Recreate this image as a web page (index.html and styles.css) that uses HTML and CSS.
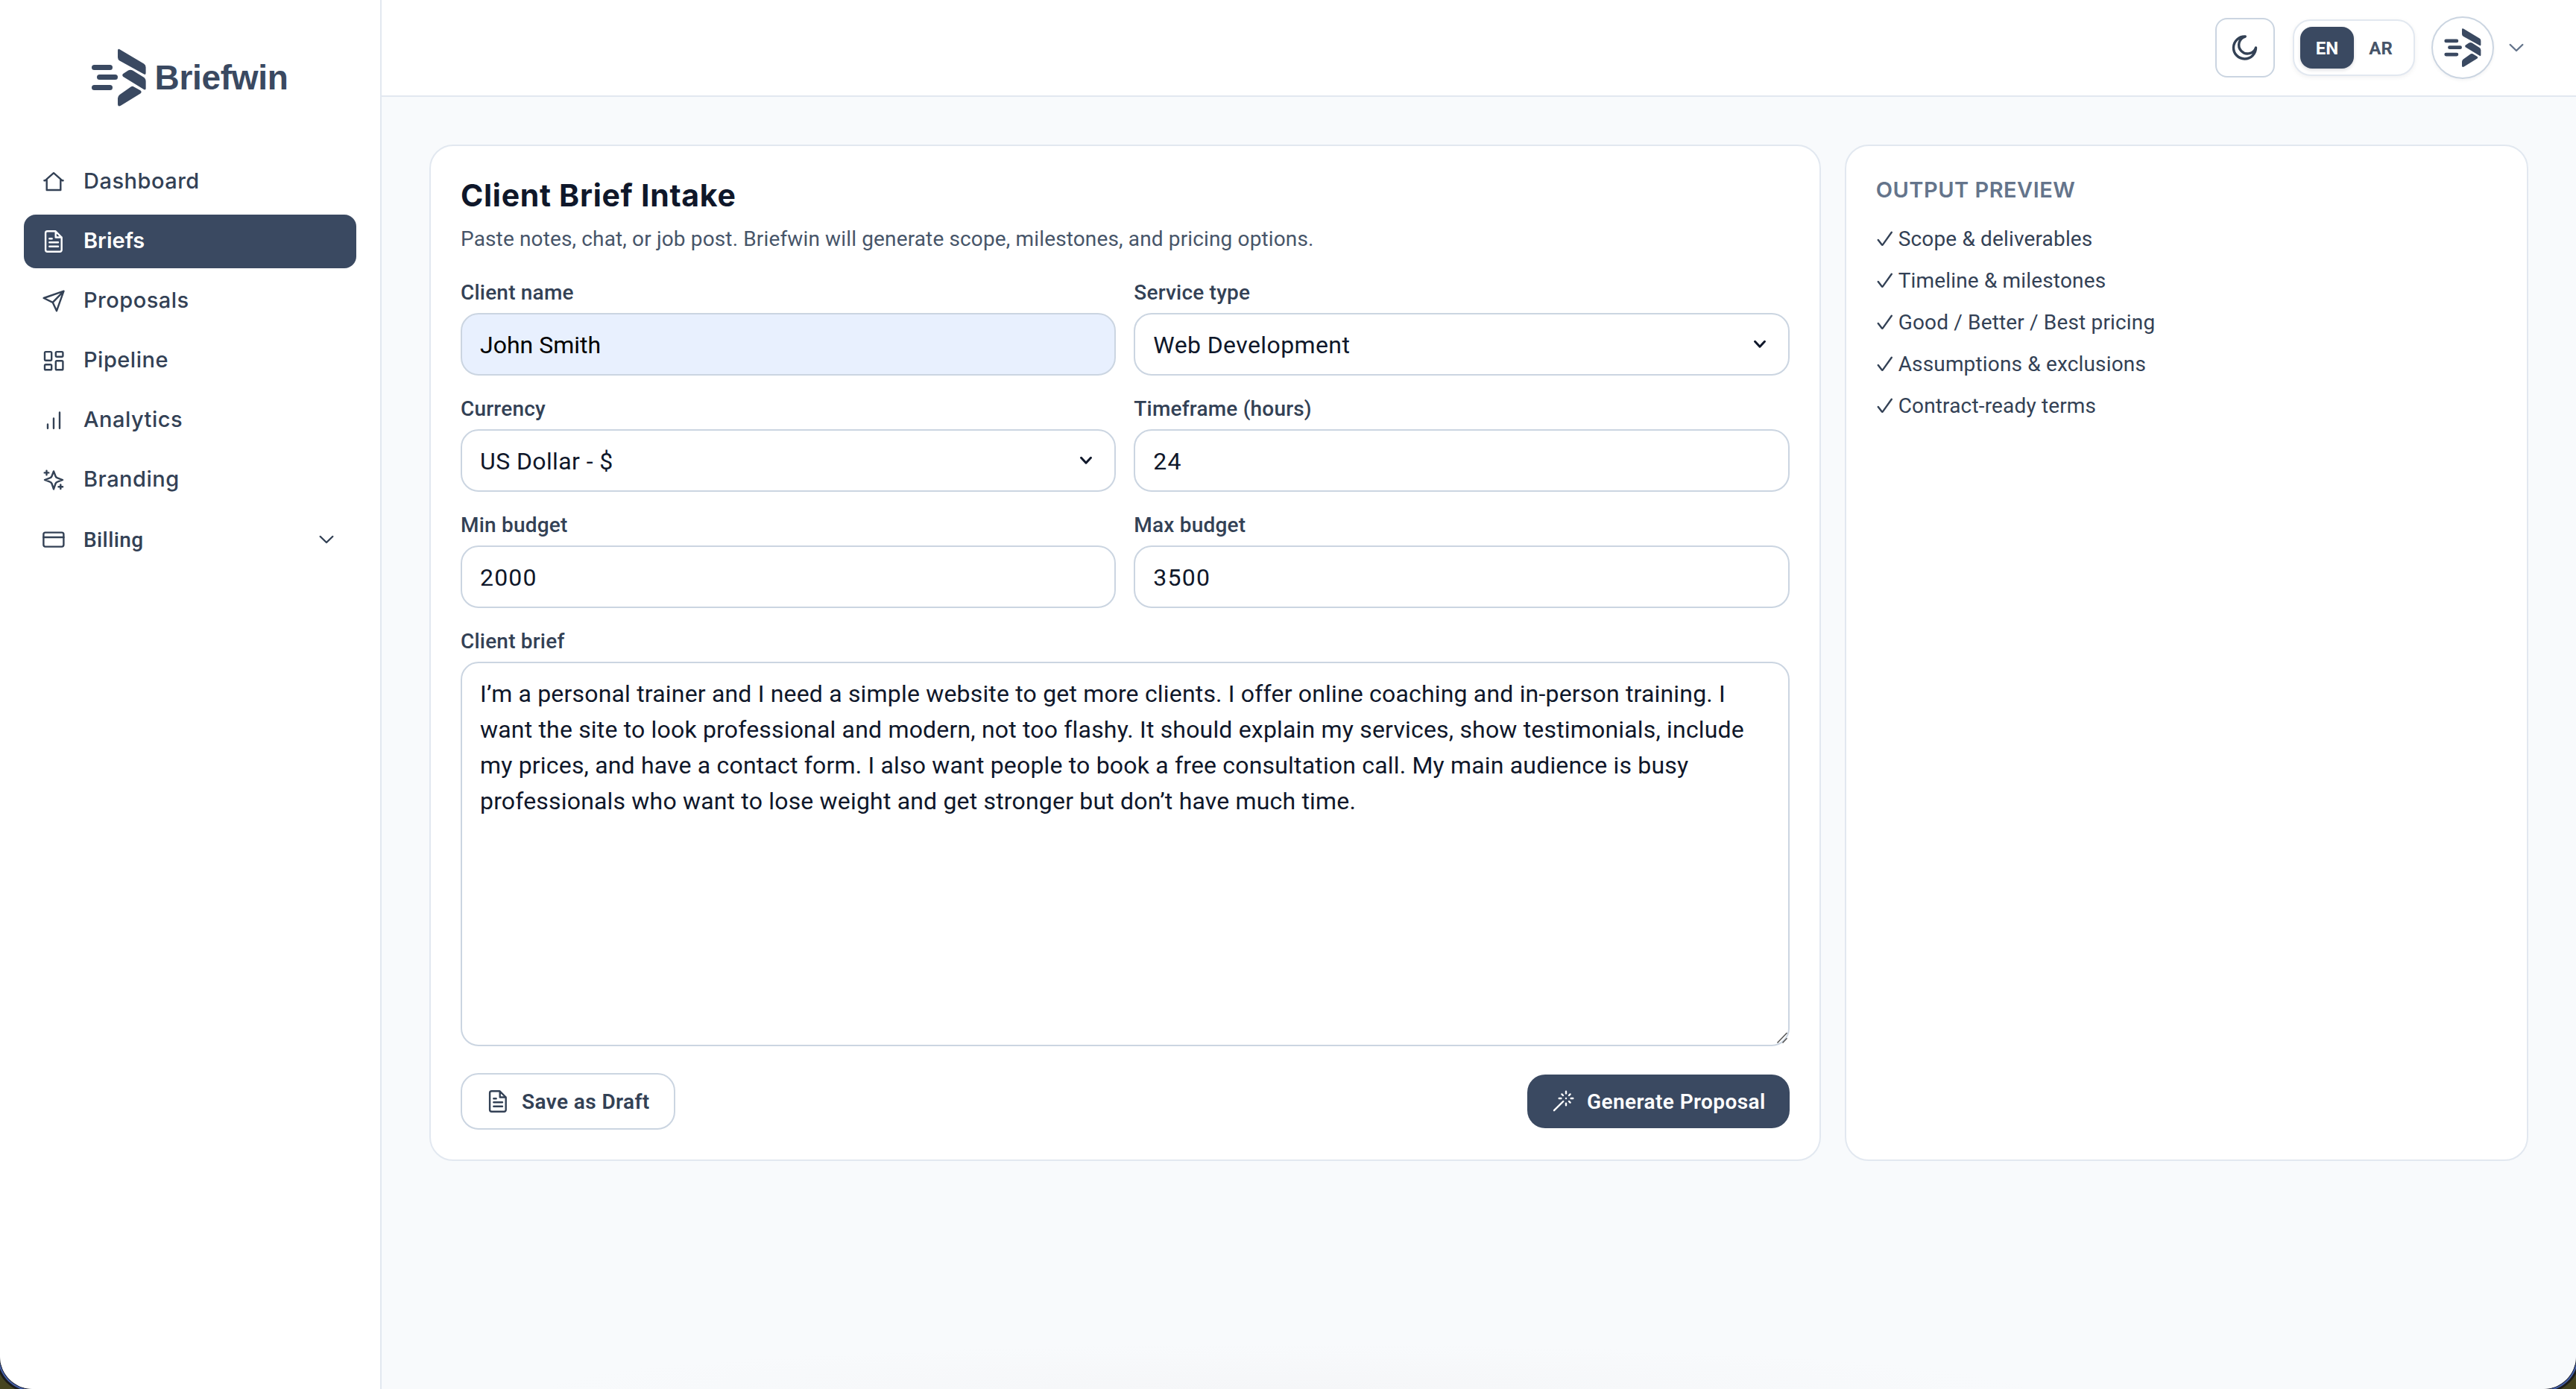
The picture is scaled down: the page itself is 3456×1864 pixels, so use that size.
FILE: index.html
```
<!DOCTYPE html>
<html lang="en">
<head>
    <meta charset="UTF-8">
    <meta name="viewport" content="width=device-width, initial-scale=1.0">
    <title>Briefwin - Client Brief Intake</title>
    <link rel="stylesheet" href="styles.css">
</head>
<body>
    <!-- shared icons -->
    <svg class="sprite" aria-hidden="true">
        <symbol id="mark" viewBox="0 0 73 80">
            <rect x="0" y="23" width="28" height="7" rx="3.5"/>
            <rect x="7" y="36" width="28" height="7" rx="3.5"/>
            <rect x="0" y="50" width="28" height="7" rx="3.5"/>
            <path d="M35 4q0-3.2 3-1.6L70 21.5q2.6 1.6 2.6 4.8V34q0 3-2.5 1.6L37.5 17.5Q35 16 35 13z"/>
            <path d="M41.8 35.2L49 30.5q3-1.7 6 0l14.5 9q3.1 2 3.1 5.5v9.5q0 3-2.6 1.6L42 38.8q-1.6-1.8-.2-3.6z"/>
            <path d="M52.6 52.4q2-1.2 4 0l9 5.2q2.2 1.8-.2 4L39 77.8q-4 1.8-4-1.8v-8q0-3 2.6-5z"/>
        </symbol>
        <symbol id="file" viewBox="0 0 32 32">
            <path d="M18.5 2.3H7.6a2.5 2.5 0 0 0-2.5 2.5v22.4a2.5 2.5 0 0 0 2.5 2.5h16.6a2.5 2.5 0 0 0 2.5-2.5V10.5zM18.7 2.5v8h8M10.3 12.2h3.4M10.3 17.2H22M10.3 22.7H22"/>
        </symbol>
        <symbol id="chevron" viewBox="0 0 32 32">
            <path d="M7.7 12l8.3 8 8.3-8"/>
        </symbol>
        <symbol id="caret" viewBox="0 0 20 20">
            <path d="M3.5 6.3l6.5 6.9 6.5-6.9"/>
        </symbol>
        <symbol id="check" viewBox="0 0 22 22">
            <path d="M2.8 12l5 6.4q.6.8 1.3-.3L20.8 1.8"/>
        </symbol>
    </svg>

    <div class="app">
        <aside class="sidebar">
            <div class="brand">
                <svg class="brand-mark"><use href="#mark"/></svg>
                <span class="brand-name">Briefwin</span>
            </div>
            <nav class="nav">
                <a class="nav-item">
                    <svg class="icon" viewBox="0 0 32 32"><path d="M3.4 14.3h1L16 4.2l11.6 10.1h1M6.7 12.5V27h18.6V12.5"/></svg>
                    <span>Dashboard</span>
                </a>
                <a class="nav-item active">
                    <svg class="icon"><use href="#file"/></svg>
                    <span>Briefs</span>
                </a>
                <a class="nav-item">
                    <svg class="icon" viewBox="0 0 32 32"><path d="M29.5 2.7L2.7 12l12 5.8L20 29.2zM29.3 2.9L14.7 17.8"/></svg>
                    <span>Proposals</span>
                </a>
                <a class="nav-item">
                    <svg class="icon" viewBox="0 0 32 32">
                        <rect x="4" y="4.1" width="9.2" height="11.6" rx="1.4"/>
                        <rect x="18.8" y="4.1" width="9.6" height="6.6" rx="1.4"/>
                        <rect x="4" y="21.3" width="9.2" height="7" rx="1.4"/>
                        <rect x="18.8" y="16.2" width="9.6" height="12.1" rx="1.4"/>
                    </svg>
                    <span>Pipeline</span>
                </a>
                <a class="nav-item">
                    <svg class="icon" viewBox="0 0 32 32"><path d="M8 21.4v5.3M16 13.4v13.3M24 5.4v21.3"/></svg>
                    <span>Analytics</span>
                </a>
                <a class="nav-item">
                    <svg class="icon" viewBox="0 0 32 32"><path d="M16 4.4l2.5 6.6c.4 1.2 1.3 2 2.5 2.4l7 2.6-7 2.6c-1.2.4-2.1 1.2-2.5 2.4L16 28.4 13.5 21c-.4-1.2-1.3-2-2.5-2.4L4 16l7-2.6c1.2-.4 2.1-1.2 2.5-2.4zM6.5 3.6v5.6M3.7 6.4h5.6M25.3 22.4V28M22.5 25.2h5.6"/></svg>
                    <span>Branding</span>
                </a>
                <a class="nav-item nav-group">
                    <svg class="icon" viewBox="0 0 32 32"><rect x="2.4" y="6.6" width="27" height="19" rx="2.5"/><path d="M2.4 13h27"/></svg>
                    <span>Billing</span>
                    <svg class="icon nav-chevron"><use href="#chevron"/></svg>
                </a>
            </nav>
        </aside>

        <div class="main">
            <header class="topbar">
                <button class="theme-btn" aria-label="Toggle theme">
                    <svg viewBox="0 0 40 40"><path d="M20.3 5A15 15 0 1 0 34.5 20A11.7 11.7 0 1 1 20.3 5z"/></svg>
                </button>
                <div class="lang">
                    <button class="lang-btn selected">EN</button>
                    <button class="lang-btn">AR</button>
                </div>
                <div class="user">
                    <span class="avatar"><svg><use href="#mark"/></svg></span>
                    <svg class="icon user-chevron"><use href="#chevron"/></svg>
                </div>
            </header>

            <main class="content">
                <section class="card">
                    <h1>Client Brief Intake</h1>
                    <p class="subtitle">Paste notes, chat, or job post. Briefwin will generate scope, milestones, and pricing options.</p>

                    <form class="form">
                        <label class="field">
                            <span>Client name</span>
                            <input class="control autofilled" type="text" value="John Smith">
                        </label>
                        <label class="field">
                            <span>Service type</span>
                            <div class="select">
                                <select class="control"><option>Web Development</option></select>
                                <svg><use href="#caret"/></svg>
                            </div>
                        </label>
                        <label class="field">
                            <span>Currency</span>
                            <div class="select">
                                <select class="control"><option>US Dollar - $</option></select>
                                <svg><use href="#caret"/></svg>
                            </div>
                        </label>
                        <label class="field">
                            <span>Timeframe (hours)</span>
                            <input class="control number" type="text" value="24">
                        </label>
                        <label class="field">
                            <span>Min budget</span>
                            <input class="control number" type="text" value="2000">
                        </label>
                        <label class="field">
                            <span>Max budget</span>
                            <input class="control number" type="text" value="3500">
                        </label>
                        <label class="field wide">
                            <span>Client brief</span>
                            <div class="textarea">
                                <textarea class="control">I’m a personal trainer and I need a simple website to get more clients. I offer online coaching and in-person training. I
want the site to look professional and modern, not too flashy. It should explain my services, show testimonials, include
my prices, and have a contact form. I also want people to book a free consultation call. My main audience is busy
professionals who want to lose weight and get stronger but don’t have much time.</textarea>
                                <svg class="grip" viewBox="0 0 16 16"><path d="M1.5 14.5l13-13.5M8.5 14.5l6-6.3"/></svg>
                            </div>
                        </label>
                    </form>

                    <div class="actions">
                        <button class="btn btn-outline">
                            <svg class="icon"><use href="#file"/></svg>
                            Save as Draft
                        </button>
                        <button class="btn btn-primary">
                            <svg class="icon" viewBox="0 0 32 32"><path d="M4 28.2L16.3 16M20 2.7v2.7M20 18.6v2.7M10.7 12h2.7M26.6 12h2.7M14.4 6.4l1.6 1.6M24 16l1.6 1.6M25.6 6.4L24 8M20 12h.01"/></svg>
                            Generate Proposal
                        </button>
                    </div>
                </section>

                <section class="card preview">
                    <h2>OUTPUT PREVIEW</h2>
                    <ul>
                        <li><svg><use href="#check"/></svg>Scope &amp; deliverables</li>
                        <li><svg><use href="#check"/></svg>Timeline &amp; milestones</li>
                        <li><svg><use href="#check"/></svg>Good / Better / Best pricing</li>
                        <li><svg><use href="#check"/></svg>Assumptions &amp; exclusions</li>
                        <li><svg><use href="#check"/></svg>Contract-ready terms</li>
                    </ul>
                </section>
            </main>
        </div>
    </div>
</body>
</html>
```
FILE: styles.css
```
* {
    box-sizing: border-box;
}
body {
    margin: 0;
    height: 100vh;
    overflow: hidden;
    background: #45441f;
    font-family: "Roboto", "Liberation Sans", sans-serif;
    font-size: 28px;
    line-height: 40px;
    color: #334155;
}
h1, h2, p, ul {
    margin: 0;
    padding: 0;
}
button, input, select, textarea {
    font-family: inherit;
}
.sprite {
    position: absolute;
    width: 0;
    height: 0;
}
.icon {
    width: 32px;
    height: 32px;
    flex-shrink: 0;
    fill: none;
    stroke: currentColor;
    stroke-width: 2.4;
    stroke-linecap: round;
    stroke-linejoin: round;
}

/* window */
.app {
    display: flex;
    height: 100vh;
    overflow: hidden;
    background: #f8fafc;
    border-radius: 0 0 44px 44px;
    box-shadow: 0 0 0 1px #1d2230, 0 0 0 3px #4560a8, 0 0 0 6px #1b1b1b;
}

/* sidebar */
.sidebar {
    width: 512px;
    flex-shrink: 0;
    background: #fff;
    border-right: 2px solid #e2e8f0;
}
.brand {
    height: 208px;
    display: flex;
    align-items: center;
    justify-content: center;
    gap: 11px;
    color: #3a4961;
}
.brand-mark {
    width: 73px;
    height: 80px;
    fill: currentColor;
}
.brand-name {
    font-family: "Liberation Sans", Arial, sans-serif;
    font-size: 46px;
    font-weight: 700;
    letter-spacing: -0.3px;
}
.nav {
    display: flex;
    flex-direction: column;
    gap: 8px;
    padding: 0 32px;
}
.nav-item {
    height: 72px;
    display: flex;
    align-items: center;
    gap: 24px;
    padding: 0 24px;
    border-radius: 16px;
    font-family: "Inter", sans-serif;
    font-size: 29px;
    font-weight: 550;
    letter-spacing: 0.5px;
}
.nav-item span {
    padding-bottom: 2px;
}
.nav-item.active {
    background: #3a4961;
    color: #fff;
    font-weight: 600;
    letter-spacing: 0;
}
.nav-item.nav-group {
    font-family: "Roboto", sans-serif;
    font-size: 28px;
    letter-spacing: 0.4px;
}
.nav-group span {
    padding: 1px 0 0;
}
.nav-chevron {
    margin-left: auto;
}

/* topbar */
.main {
    flex: 1;
    min-width: 0;
    background: radial-gradient(ellipse 1000px 60px at 1210px 100%, #f5f6f8, #f8fafc);
}
.topbar {
    height: 130px;
    display: flex;
    align-items: center;
    justify-content: flex-end;
    padding: 0 64px;
    background: #fff;
    border-bottom: 2px solid #e2e8f0;
}
.theme-btn {
    width: 80px;
    height: 80px;
    display: flex;
    align-items: center;
    justify-content: center;
    padding: 0;
    margin-right: 24px;
    background: #fff;
    border: 2px solid #cbd5e1;
    border-radius: 16px;
}
.theme-btn svg {
    width: 40px;
    height: 40px;
    fill: none;
    stroke: #334155;
    stroke-width: 3.4;
    stroke-linejoin: round;
}
.lang {
    display: flex;
    padding: 8px;
    margin-right: 22px;
    background: #fff;
    border: 2px solid #e2e8f0;
    border-radius: 24px;
    box-shadow: 0 2px 6px rgba(15, 23, 42, 0.06);
}
.lang-btn {
    width: 72px;
    height: 56px;
    padding: 2px 0 0;
    border: 0;
    border-radius: 16px;
    background: none;
    color: #475569;
    font-size: 24px;
    font-weight: 700;
}
.lang-btn.selected {
    background: #3a4961;
    color: #fff;
    box-shadow: 0 2px 4px rgba(15, 23, 42, 0.15);
}
.user {
    display: flex;
    align-items: center;
    gap: 14px;
}
.avatar {
    width: 84px;
    height: 84px;
    display: flex;
    align-items: center;
    justify-content: center;
    border: 2px solid #cbd5e1;
    border-radius: 50%;
    box-shadow: 0 2px 4px rgba(15, 23, 42, 0.05);
}
.avatar svg {
    width: 50px;
    height: 54px;
    fill: #3a4961;
}
.user-chevron {
    color: #64748b;
}

/* content */
.content {
    display: grid;
    grid-template-columns: 1866.67px 1fr;
    gap: 32px;
    padding: 64px;
}
.card {
    padding: 40px;
    background: #fff;
    border: 2px solid #e2e8f0;
    border-radius: 32px;
}
.card h1 {
    margin-bottom: 13px;
    font-family: "Inter", sans-serif;
    font-size: 41px;
    font-weight: 650;
    line-height: 52px;
    letter-spacing: 0.7px;
    color: #0f172a;
}
.subtitle {
    color: #475569;
    letter-spacing: 0.14px;
}

/* form */
.form {
    display: grid;
    grid-template-columns: 1fr 1fr;
    gap: 24px;
    margin-top: 31px;
}
.field {
    font-weight: 500;
    letter-spacing: 0.2px;
}
.field > span {
    display: block;
    line-height: 42px;
    margin-bottom: 6px;
}
.field.wide {
    grid-column: span 2;
}
.control {
    display: block;
    width: 100%;
    height: 84px;
    margin: 0;
    padding: 2px 24px 0;
    border: 2px solid #cbd5e1;
    border-radius: 24px;
    outline: none;
    appearance: none;
    background: #fff;
    color: #0f172a;
    font-size: 32px;
    font-weight: 400;
    letter-spacing: 0.4px;
}
.control.number {
    letter-spacing: 1.2px;
}
.autofilled {
    background: #e8f0fe;
    color: #000;
    letter-spacing: 0;
}
.select, .textarea {
    position: relative;
}
.select svg {
    position: absolute;
    top: 32px;
    right: 30px;
    width: 20px;
    height: 20px;
    fill: none;
    stroke: #0f172a;
    stroke-width: 3;
    stroke-linecap: round;
    stroke-linejoin: round;
}
textarea.control {
    height: 516px;
    padding: 17px 24px;
    line-height: 48px;
    letter-spacing: 0.18px;
    white-space: pre;
    overflow: hidden;
    resize: none;
}
.grip {
    position: absolute;
    right: 2px;
    bottom: 3px;
    width: 16px;
    height: 16px;
    fill: none;
    stroke: #555;
    stroke-width: 1.5;
}

/* buttons */
.actions {
    display: flex;
    align-items: center;
    justify-content: space-between;
    margin-top: 36px;
}
.btn {
    height: 72px;
    display: flex;
    align-items: center;
    gap: 16px;
    padding: 0 32px;
    border: 0;
    border-radius: 24px;
    font-size: 28px;
    font-weight: 600;
    letter-spacing: 0.4px;
}
.btn-outline {
    height: 76px;
    border: 2px solid #cbd5e1;
    background: #fff;
    color: #334155;
}
.btn-primary {
    background: #3a4961;
    color: #fff;
}

/* preview */
.preview h2 {
    margin-bottom: 28px;
    font-family: "Inter", sans-serif;
    font-size: 29px;
    font-weight: 600;
    line-height: 37px;
    letter-spacing: 0.5px;
    color: #64748b;
}
.preview ul {
    display: flex;
    flex-direction: column;
    gap: 16px;
    list-style: none;
}
.preview li {
    display: flex;
    align-items: center;
    gap: 8px;
    letter-spacing: 0.16px;
}
.preview li svg {
    width: 22px;
    height: 22px;
    fill: none;
    stroke: #334155;
    stroke-width: 2.4;
    stroke-linecap: round;
    stroke-linejoin: round;
}
```
